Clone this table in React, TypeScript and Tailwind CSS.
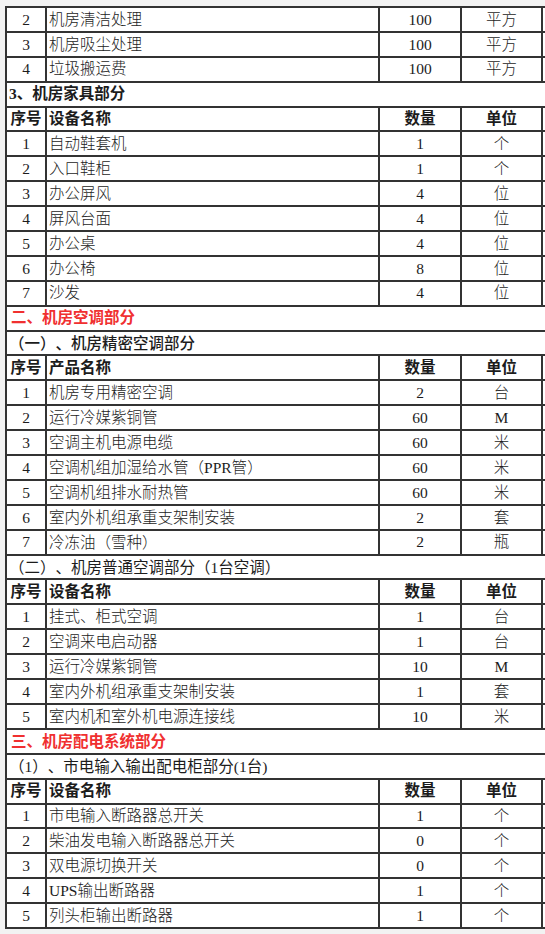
import React from "react";

type Row =
  | { kind: "item"; no: string; name: string; qty: string; unit: string }
  | { kind: "header"; label: string }
  | { kind: "title"; text: string; tone: "black" | "red" | "sub" | "plain" };

const rows: Row[] = [
  { kind: "item", no: "2", name: "机房清洁处理", qty: "100", unit: "平方" },
  { kind: "item", no: "3", name: "机房吸尘处理", qty: "100", unit: "平方" },
  { kind: "item", no: "4", name: "垃圾搬运费", qty: "100", unit: "平方" },
  { kind: "title", text: "3、机房家具部分", tone: "black" },
  { kind: "header", label: "设备名称" },
  { kind: "item", no: "1", name: "自动鞋套机", qty: "1", unit: "个" },
  { kind: "item", no: "2", name: "入口鞋柜", qty: "1", unit: "个" },
  { kind: "item", no: "3", name: "办公屏风", qty: "4", unit: "位" },
  { kind: "item", no: "4", name: "屏风台面", qty: "4", unit: "位" },
  { kind: "item", no: "5", name: "办公桌", qty: "4", unit: "位" },
  { kind: "item", no: "6", name: "办公椅", qty: "8", unit: "位" },
  { kind: "item", no: "7", name: "沙发", qty: "4", unit: "位" },
  { kind: "title", text: "二、机房空调部分", tone: "red" },
  { kind: "title", text: "（一）、机房精密空调部分", tone: "sub" },
  { kind: "header", label: "产品名称" },
  { kind: "item", no: "1", name: "机房专用精密空调", qty: "2", unit: "台" },
  { kind: "item", no: "2", name: "运行冷媒紫铜管", qty: "60", unit: "M" },
  { kind: "item", no: "3", name: "空调主机电源电缆", qty: "60", unit: "米" },
  { kind: "item", no: "4", name: "空调机组加湿给水管（PPR管）", qty: "60", unit: "米" },
  { kind: "item", no: "5", name: "空调机组排水耐热管", qty: "60", unit: "米" },
  { kind: "item", no: "6", name: "室内外机组承重支架制安装", qty: "2", unit: "套" },
  { kind: "item", no: "7", name: "冷冻油（雪种）", qty: "2", unit: "瓶" },
  { kind: "title", text: "（二）、机房普通空调部分（1台空调）", tone: "plain" },
  { kind: "header", label: "设备名称" },
  { kind: "item", no: "1", name: "挂式、柜式空调", qty: "1", unit: "台" },
  { kind: "item", no: "2", name: "空调来电启动器", qty: "1", unit: "台" },
  { kind: "item", no: "3", name: "运行冷媒紫铜管", qty: "10", unit: "M" },
  { kind: "item", no: "4", name: "室内外机组承重支架制安装", qty: "1", unit: "套" },
  { kind: "item", no: "5", name: "室内机和室外机电源连接线", qty: "10", unit: "米" },
  { kind: "title", text: "三、机房配电系统部分", tone: "red" },
  { kind: "title", text: "（1）、市电输入输出配电柜部分(1台)", tone: "plain" },
  { kind: "header", label: "设备名称" },
  { kind: "item", no: "1", name: "市电输入断路器总开关", qty: "1", unit: "个" },
  { kind: "item", no: "2", name: "柴油发电输入断路器总开关", qty: "0", unit: "个" },
  { kind: "item", no: "3", name: "双电源切换开关", qty: "0", unit: "个" },
  { kind: "item", no: "4", name: "UPS输出断路器", qty: "1", unit: "个" },
  { kind: "item", no: "5", name: "列头柜输出断路器", qty: "1", unit: "个" },
];

const cell = "h-[24.9px] border-2 border-[#333] p-0 align-middle leading-none";

const toneClass = {
  black: "font-bold text-[#1c1c1c] pl-[2px]",
  red: "font-bold text-[#f03030] pl-[4px]",
  sub: "font-medium text-[#1c1c1c] pl-[2px]",
  plain: "font-normal text-[#1c1c1c] pl-[2px]",
};

// Liberation Serif draws （ ） narrow, so hand the full-width brackets to the CJK face
function Txt({ text }: { text: string }) {
  const parts = text.split(/([（）])/);
  return (
    <>
      {parts.map((p, i) =>
        p === "（" || p === "）" ? (
          <span key={i} className="font-['Noto_Sans_CJK_SC',sans-serif]">
            {p}
          </span>
        ) : (
          p
        ),
      )}
    </>
  );
}

export default function App() {
  return (
    <div
      className="min-h-[934px] w-[545px] overflow-hidden bg-[#f2f2f2] pt-[6px] pl-[5px]"
      style={{ fontFamily: '"Liberation Serif", "Noto Sans CJK SC", serif' }}
    >
      <table className="w-[620px] table-fixed border-collapse bg-white text-[15.5px] text-[#1c1c1c] [text-spacing-trim:space-all]">
        <colgroup>
          <col className="w-[40px]" />
          <col className="w-[333px]" />
          <col className="w-[82px]" />
          <col className="w-[81px]" />
          <col className="w-[84px]" />
        </colgroup>
        <tbody>
          {rows.map((row, i) => {
            if (row.kind === "title") {
              return (
                <tr key={i}>
                  <td
                    colSpan={5}
                    className={`${cell} border-r-0 whitespace-nowrap ${toneClass[row.tone]}`}
                  >
                    <Txt text={row.text} />
                  </td>
                </tr>
              );
            }
            if (row.kind === "header") {
              return (
                <tr key={i} className="font-bold">
                  <td className={`${cell} text-center`}>序号</td>
                  <td className={`${cell} pl-[2px]`}>{row.label}</td>
                  <td className={`${cell} text-center`}>数量</td>
                  <td className={`${cell} text-center`}>单位</td>
                  <td className={cell}></td>
                </tr>
              );
            }
            return (
              <tr key={i} className="font-light">
                <td className={`${cell} text-center`}>{row.no}</td>
                <td className={`${cell} pl-[2px] whitespace-nowrap`}>
                  <Txt text={row.name} />
                </td>
                <td className={`${cell} text-center`}>{row.qty}</td>
                <td className={`${cell} text-center`}>{row.unit}</td>
                <td className={cell}></td>
              </tr>
            );
          })}
        </tbody>
      </table>
    </div>
  );
}
